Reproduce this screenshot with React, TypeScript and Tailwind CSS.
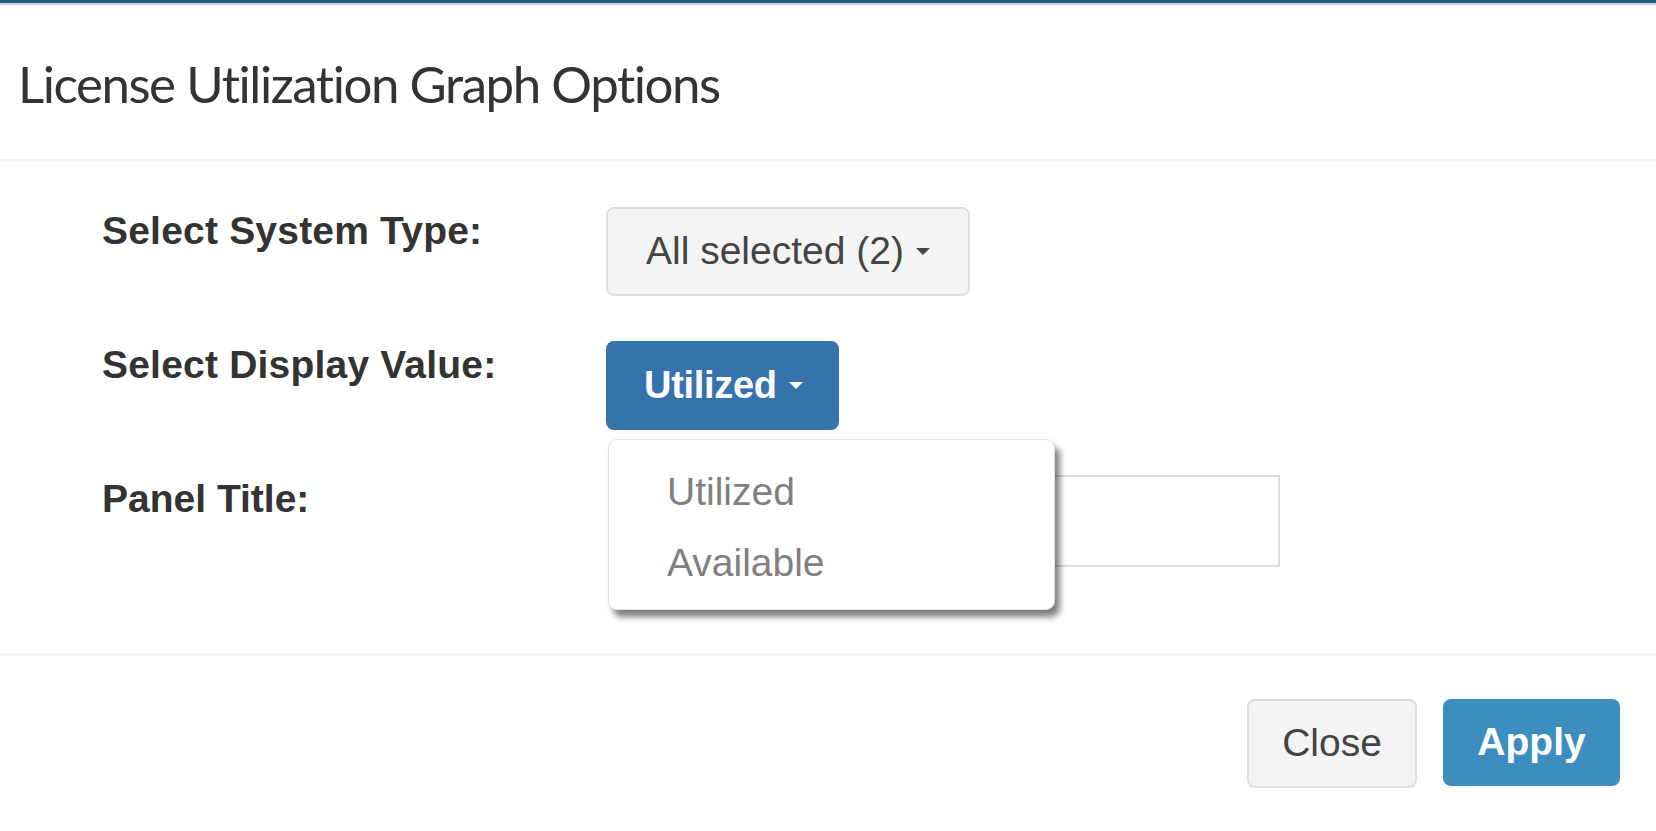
import { useState } from "react";

const labelCls =
  "text-[39px] leading-[48px] font-bold text-[#333]";

function Caret() {
  return (
    <span className="inline-block ml-[12px] align-middle w-0 h-0 border-l-[7px] border-r-[7px] border-t-[7px] border-l-transparent border-r-transparent border-t-current" />
  );
}

export default function App() {
  const [value, setValue] = useState("Utilized");
  const [title, setTitle] = useState("");

  return (
    <div
      className="w-[1656px] h-[831px] bg-white overflow-hidden"
      style={{ fontFamily: '"Liberation Sans", Arial, sans-serif' }}
    >
      <div className="h-[3px] bg-[#2b5b7b]" />
      <div className="h-[2px] bg-[#c3d4de]" />

      {/* header */}
      <div className="h-[157px] pl-[18px] pt-[50px] border-b-[3px] border-[#f4f4f4]">
        <h4
          className="text-[51px] leading-[58px] text-[#333] tracking-[-1.45px]"
          style={{ fontFamily: '"Lato", "Open Sans", sans-serif' }}
        >
          License Utilization Graph Options
        </h4>
      </div>

      {/* body */}
      <div className="pl-[102px] pt-[45px] pb-[86px] border-b-[3px] border-[#f4f4f4]">
        <div className="grid grid-cols-[504px_1fr] gap-y-[45px] items-start">
          <label className={labelCls + " tracking-[0.2px]"}>Select System Type:</label>
          <div>
            <button className="h-[89px] px-[38px] rounded-[8px] border-2 border-[#dddddd] bg-[#f4f4f4] text-[39px] text-[#444] flex items-center">
              All selected (2)
              <Caret />
            </button>
          </div>

          <label className={labelCls + " tracking-[0.2px]"}>Select Display Value:</label>
          <div className="relative">
            <button className="h-[89px] pl-[38px] pr-[36px] rounded-[8px] bg-[#3673ad] text-[38px] font-bold text-white flex items-center tracking-[-0.3px]">
              {value}
              <Caret />
            </button>
            <ul className="absolute z-10 left-[2px] top-[98px] w-[447px] h-[171px] bg-white rounded-[9px] border border-[#e3e3e3] shadow-[5px_7px_6px_rgba(0,0,0,0.5)] pt-[16px]">
              {["Utilized", "Available"].map((v) => (
                <li
                  key={v}
                  onClick={() => setValue(v)}
                  className="pl-[58px] h-[71px] leading-[71px] text-[39px] text-[#808080] cursor-pointer"
                >
                  {v}
                </li>
              ))}
            </ul>
          </div>

          <label className={labelCls}>Panel Title:</label>
          <div className="pl-[8px]">
            <input
              value={title}
              onChange={(e) => setTitle(e.target.value)}
              className="w-[666px] h-[92px] border-2 border-[#d9dce5] bg-white outline-none px-[30px] text-[39px]"
            />
          </div>
        </div>
      </div>

      {/* footer */}
      <div className="flex justify-end gap-[26px] pt-[43px] pr-[36px]">
        <button className="w-[170px] h-[89px] rounded-[8px] border-2 border-[#dddddd] bg-[#f4f4f4] text-[39px] text-[#444]">
          Close
        </button>
        <button className="w-[177px] h-[87px] rounded-[8px] bg-[#3d8ebf] text-[39px] font-bold text-white">
          Apply
        </button>
      </div>
    </div>
  );
}
